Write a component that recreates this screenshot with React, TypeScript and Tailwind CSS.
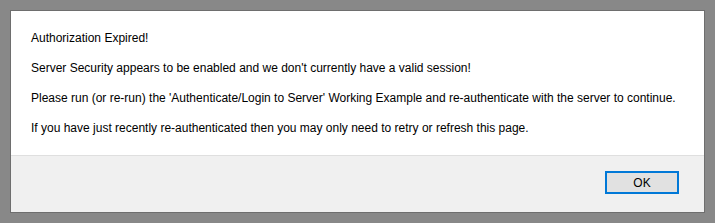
import React from "react";

export default function App() {
  return (
    <div className="w-[715px] h-[223px] bg-[#888888] pt-[10px] pl-[10px]" style={{ fontFamily: '"Liberation Sans", Arial, sans-serif' }}>
      <div className="w-[695px] h-[203px] border border-[#6e6e6e] bg-white flex flex-col">
        <div className="px-[20px] pt-[20px] pb-[19px] flex flex-col gap-[15px] text-[12px] leading-[15px] text-black">
          <p>Authorization Expired!</p>
          <p>Server Security appears to be enabled and we don't currently have a valid session!</p>
          <p>Please run (or re-run) the 'Authenticate/Login to Server' Working Example and re-authenticate with the server to continue.</p>
          <p>If you have just recently re-authenticated then you may only need to retry or refresh this page.</p>
        </div>
        <div className="flex-1 border-t border-[#dfdfdf] bg-[#f0f0f0] flex justify-end items-start pt-[15px] pr-[25px]">
          <button className="w-[74px] h-[23px] border-2 border-[#0078d7] bg-[#e1e1e1] text-[12px] leading-none text-black">OK</button>
        </div>
      </div>
    </div>
  );
}
